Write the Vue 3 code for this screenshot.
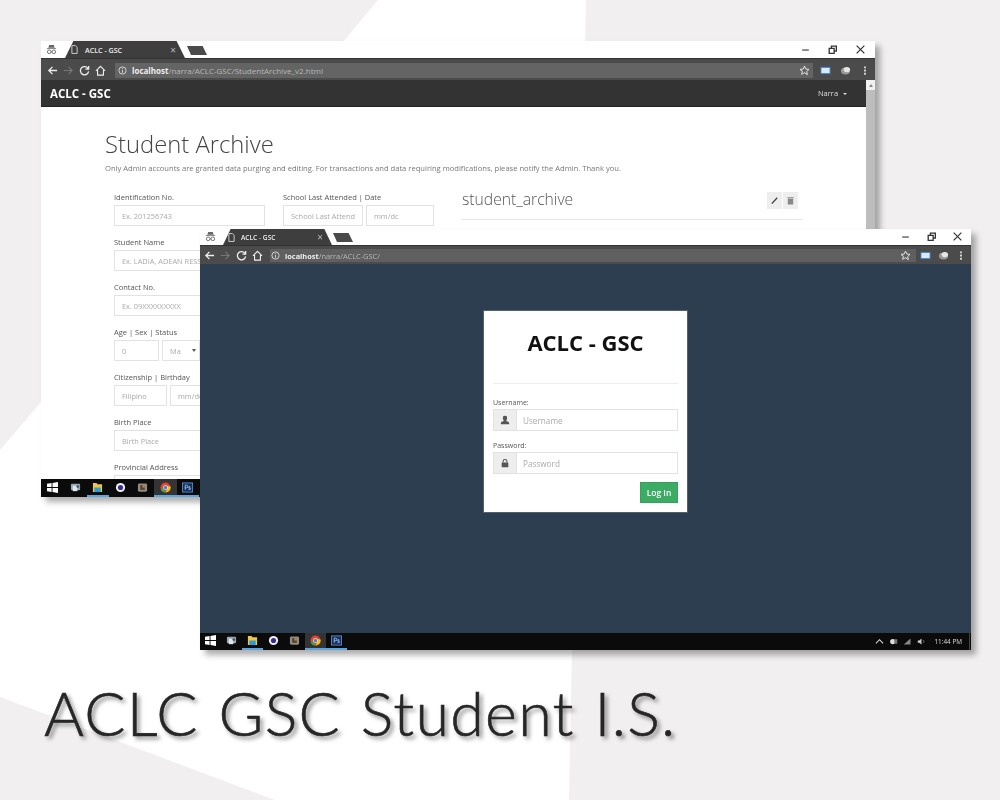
<template>
  <div class="page">
    <svg class="backdrop" viewBox="0 0 1000 800" aria-hidden="true">
      <polygon points="0,0 378,0 41,402 0,450" />
      <polygon points="586,0 1000,0 1000,800 569,800 572,650" />
      <polygon points="0,697 275,800 0,800" />
    </svg>

    <svg class="sprites" aria-hidden="true">
      <symbol id="i-win" viewBox="0 0 12 12"><path fill="#fff" d="M0 2l5-.8v4.3H0zM6 1l6-1v5.500H6zM0 6.500h5v4.300L0 10zM6 6.500h6V12l-6-1z" /></symbol>
      <symbol id="i-people" viewBox="0 0 12 12"><rect x="1" y="2" width="10" height="7" rx="1" fill="#9aa4ad" /><rect x="3" y="4" width="5" height="6" fill="#dfe6ec" /><circle cx="8.500" cy="5" r="1.500" fill="#44576a" /></symbol>
      <symbol id="i-folder" viewBox="0 0 12 12"><path fill="#f1c644" d="M1 1h4l1 1.500h5V11H1z" /><rect x="2.500" y="6" width="7" height="5" fill="#2f9bd8" /></symbol>
      <symbol id="i-ring" viewBox="0 0 12 12"><circle cx="6" cy="6" r="5" fill="#f3f0f8" /><circle cx="6" cy="6" r="2.800" fill="#3c2a8c" /></symbol>
      <symbol id="i-box" viewBox="0 0 12 12"><rect x="1" y="1.500" width="10" height="9" rx="1.500" fill="#8b8b88" /><rect x="3.500" y="3.500" width="5" height="5" fill="#5c3f2b" /><rect x="6" y="3.500" width="2.500" height="2.500" fill="#d08a3c" /></symbol>
      <symbol id="i-chrome" viewBox="0 0 12 12"><circle cx="6" cy="6" r="5.500" fill="#e0442f" /><path fill="#35a853" d="M.8 8.500 3.500 6 6 11.500A5.500 5.500 0 0 1 .8 8.500z" /><path fill="#f4c20d" d="M11.500 5 6 4l2 3-2 4.500A5.500 5.500 0 0 0 11.500 5z" /><circle cx="6" cy="6" r="2.500" fill="#fff" /><circle cx="6" cy="6" r="1.900" fill="#3f7fe0" /></symbol>
      <symbol id="i-ps" viewBox="0 0 12 12"><rect x=".5" y="1" width="11" height="10" fill="#18305c" stroke="#5a86c6" /><path fill="none" stroke="#9cc0ee" d="M3.500 8.500v-5h1.500a1.300 1.300 0 0 1 0 2.800H3.500M9 5.200H7.500v1.300H9v1.500H7" /></symbol>
      <symbol id="i-person" viewBox="0 0 12 12"><path fill="#555" d="M6 1a2.500 2.500 0 0 1 2.500 2.800C8.400 5.500 7.600 6.500 7.400 7c0 .7 3.600 1.100 3.600 2.500V11H1V9.500C1 8.100 4.600 7.700 4.600 7c-.2-.5-1-1.500-1.100-3.200A2.500 2.500 0 0 1 6 1z" /></symbol>
      <symbol id="i-lock" viewBox="0 0 12 12"><path fill="none" stroke="#555" stroke-width="1.300" d="M3.700 5.500V4a2.300 2.300 0 0 1 4.600 0v1.500" /><rect x="2" y="5.300" width="8" height="5.700" rx=".6" fill="#555" /></symbol>
      <symbol id="i-incognito" viewBox="0 0 12 12"><path fill="#666" d="M3.500 1h5l1 3h-7zM1 4.500h10v1H1z" /><circle cx="3.500" cy="8.500" r="2" fill="none" stroke="#666" /><circle cx="8.500" cy="8.500" r="2" fill="none" stroke="#666" /><path stroke="#666" d="M5.500 8.500h1" /></symbol>
    </svg>

    <section v-for="win in windows" :key="win.id" class="window" :class="`window-${win.id}`">
      <header class="strip">
        <svg class="incognito"><use href="#i-incognito" /></svg>
        <div class="tab">
          <svg class="tab-doc" viewBox="0 0 8 10"><path fill="none" stroke="#ddd" d="M1 .5h4l2 2v7H1z" /></svg>
          <span class="tab-title">ACLC - GSC</span>
          <span class="tab-close">×</span>
        </div>
        <div class="new-tab"></div>
        <div class="controls">
          <svg viewBox="0 0 10 10"><path stroke="#555" stroke-width="1.200" d="M2 5.500h6" /></svg>
          <svg viewBox="0 0 10 10"><path fill="none" stroke="#333" stroke-width="1.200" d="M2 4h4.500v4.500H2zM4 4V2h4.500v4.500h-2" /></svg>
          <svg viewBox="0 0 10 10"><path stroke="#333" stroke-width="1.100" d="M1.500 1.500l7 7M8.500 1.500l-7 7" /></svg>
        </div>
      </header>

      <div class="toolbar">
        <svg class="tool" viewBox="0 0 12 12"><path fill="none" stroke="#eee" stroke-width="1.400" d="M11 6H2M6 2 2 6l4 4" /></svg>
        <svg class="tool" viewBox="0 0 12 12"><path fill="none" stroke="#777" stroke-width="1.200" d="M1 6h9M6 2l4 4-4 4" /></svg>
        <svg class="tool" viewBox="0 0 12 12"><path fill="none" stroke="#eee" stroke-width="1.400" d="M10 4a4.500 4.500 0 1 0 .5 3M10.500 1v3.500H7" /></svg>
        <svg class="tool" viewBox="0 0 12 12"><path fill="none" stroke="#eee" stroke-width="1.200" d="M1 6.500 6 1.500l5 5M2.800 5.500V11h6.400V5.500" /></svg>
        <div class="address">
          <svg class="info" viewBox="0 0 10 10"><circle cx="5" cy="5" r="4" fill="none" stroke="#ddd" /><path stroke="#ddd" d="M5 4.500V7.500M5 2.500v1" /></svg>
          <span class="host">localhost</span><span class="path">{{ win.path }}</span>
          <svg class="star" viewBox="0 0 12 12"><path fill="none" stroke="#eee" d="M6 1.200l1.500 3.200 3.400.4-2.500 2.300.7 3.400L6 8.400l-3.100 1.700.7-3.400L1.100 4.800l3.400-.4z" /></svg>
        </div>
        <svg class="ext ext-screen" viewBox="0 0 12 12"><rect x="1" y="2.500" width="10" height="7" fill="#dfe8f2" stroke="#2f78c4" /></svg>
        <svg class="ext ext-cloud" viewBox="0 0 12 12"><ellipse cx="6" cy="6.500" rx="5" ry="3.800" fill="#9a9a9a" /><ellipse cx="7.500" cy="5" rx="3.500" ry="2.800" fill="#e6e6e6" /></svg>
        <svg class="ext dots" viewBox="0 0 4 12"><path fill="#ddd" d="M1 1.500h2v2H1zM1 5h2v2H1zM1 8.500h2v2H1z" /></svg>
      </div>

      <div v-if="win.id === 'archive'" class="archive">
        <div class="archive-main">
          <nav class="navbar">
            <strong class="brand">ACLC - GSC</strong>
            <span class="user">Narra <i class="caret"></i></span>
          </nav>
          <div class="content">
            <h1>Student Archive</h1>
            <p class="lead">Only Admin accounts are granted data purging and editing. For transactions and data requiring modifications, please notify the Admin. Thank you.</p>
            <div class="columns">
              <form class="col-form">
                <div v-for="row in formRows" :key="row.label" class="field">
                  <label>{{ row.label }}</label>
                  <div class="inputs">
                    <span v-for="box in row.boxes" :key="box.text" class="input" :style="{ width: box.width + 'px' }">
                      {{ box.text }}<i v-if="box.select" class="select-caret"></i>
                    </span>
                  </div>
                </div>
              </form>
              <div class="col-school">
                <label>School Last Attended | Date</label>
                <div class="inputs">
                  <span class="input" style="width: 80px">School Last Attend</span>
                  <span class="input" style="width: 68px">mm/dc</span>
                </div>
              </div>
              <div class="col-table">
                <div class="table-head">
                  <h2>student_archive</h2>
                  <div class="btn-group">
                    <span><svg viewBox="0 0 10 10"><path stroke="#444" stroke-width="1.500" d="M2 8.500 8 2" /></svg></span>
                    <span><svg viewBox="0 0 10 10"><path fill="#888" d="M2 3h6v6.500H2zM1.500 1.500h7v1h-7z" /></svg></span>
                  </div>
                </div>
              </div>
            </div>
          </div>
        </div>
        <div class="scrollbar"><span class="scroll-arrow"></span><span class="scroll-thumb"></span></div>
      </div>

      <div v-else class="login-body">
        <form class="login-card">
          <h2>ACLC - GSC</h2>
          <hr />
          <label>Username:</label>
          <div class="group">
            <span class="addon"><svg><use href="#i-person" /></svg></span>
            <span class="group-input">Username</span>
          </div>
          <label>Password:</label>
          <div class="group">
            <span class="addon"><svg><use href="#i-lock" /></svg></span>
            <span class="group-input">Password</span>
          </div>
          <button type="button" class="login-btn">Log In</button>
        </form>
      </div>

      <footer class="taskbar">
        <span v-for="item in taskItems" :key="item.icon" class="task" :class="{ open: item.open, active: item.active }">
          <svg><use :href="`#i-${item.icon}`" /></svg>
        </span>
        <div v-if="win.id === 'login'" class="tray">
          <svg viewBox="0 0 10 10"><path fill="none" stroke="#ddd" stroke-width="1.200" d="M1 7l4-4 4 4" /></svg>
          <svg viewBox="0 0 12 10"><circle cx="5" cy="5" r="3.500" fill="#ddd" /><rect x="7" y="2" width="4" height="6" fill="#777" /></svg>
          <svg viewBox="0 0 12 10"><path fill="#888" d="M1 9 10 1v8z" /></svg>
          <svg viewBox="0 0 12 10"><path fill="#ccc" d="M1 3.500h2L6 1v8L3 6.500H1z" /><path fill="none" stroke="#888" d="M8 3l1.500 2L8 7" /></svg>
          <span class="clock">11:44 PM</span>
          <span class="show-desktop"></span>
        </div>
      </footer>
    </section>

    <div class="caption">ACLC GSC Student I.S.</div>
  </div>
</template>

<script setup>
const windows = [
  { id: 'archive', path: '/narra/ACLC-GSC/StudentArchive_v2.html' },
  { id: 'login', path: '/narra/ACLC-GSC/' }
]

const taskItems = [
  { icon: 'win' },
  { icon: 'people' },
  { icon: 'folder', open: true },
  { icon: 'ring' },
  { icon: 'box' },
  { icon: 'chrome', open: true, active: true },
  { icon: 'ps', open: true }
]

const formRows = [
  { label: 'Identification No.', boxes: [{ text: 'Ex. 201256743', width: 151 }] },
  { label: 'Student Name', boxes: [{ text: 'Ex. LADIA, ADEAN RESS', width: 151 }] },
  { label: 'Contact No.', boxes: [{ text: 'Ex. 09XXXXXXXXX', width: 151 }] },
  { label: 'Age | Sex | Status', boxes: [{ text: '0', width: 45 }, { text: 'Ma', width: 38, select: true }] },
  { label: 'Citizenship | Birthday', boxes: [{ text: 'Filipino', width: 53 }, { text: 'mm/dd/yyyy', width: 90 }] },
  { label: 'Birth Place', boxes: [{ text: 'Birth Place', width: 151 }] },
  { label: 'Provincial Address', boxes: [{ text: 'Provincial Address', width: 151 }] }
]
</script>

<style>
html,
body {
  margin: 0;
  background: #fff;
}
</style>

<style scoped>
.page {
  position: relative;
  width: 1000px;
  height: 800px;
  overflow: hidden;
  background: #fff;
  font-family: "Open Sans", "Liberation Sans", sans-serif;
}

.backdrop {
  position: absolute;
  inset: 0;
  width: 1000px;
  height: 800px;
  fill: #f1eff0;
}

.sprites {
  position: absolute;
  width: 0;
  height: 0;
}

.window {
  position: absolute;
  display: flex;
  flex-direction: column;
  overflow: hidden;
  background: #fff;
  box-shadow: 5px 5px 6px rgba(0, 0, 0, 0.32);
  filter: blur(0.6px);
}

.window-archive {
  left: 41px;
  top: 41px;
  width: 834px;
  height: 456px;
}

.window-login {
  left: 200px;
  top: 229px;
  width: 771px;
  height: 421px;
}

/* tab strip */
.strip {
  display: flex;
  align-items: flex-end;
  flex: none;
  height: 17px;
  background: #fff;
}

.window-login .strip {
  height: 16px;
}

.incognito {
  width: 11px;
  height: 11px;
  margin: 0 0 3px 5px;
}

.tab {
  display: flex;
  align-items: center;
  width: 120px;
  height: 17px;
  margin-left: 8px;
  padding: 0 9px 0 6px;
  box-sizing: border-box;
  background: #3e3e3e;
  clip-path: polygon(0 100%, 7% 0, 93% 0, 100% 100%);
  color: #eee;
  font-size: 7.100px;
  font-weight: 600;
}

.window-login .tab {
  width: 109px;
  height: 16px;
  margin-left: 7px;
  padding-left: 5px;
  font-size: 6.600px;
}

.tab-doc {
  width: 7px;
  height: 9px;
  margin-right: 7px;
}

.window-login .tab-doc {
  margin-right: 6px;
}

.tab-title {
  flex: 1;
}

.tab-close {
  font-size: 10px;
  font-weight: 400;
  color: #bbb;
}

.new-tab {
  width: 20px;
  height: 9px;
  margin: 0 0 3px 2px;
  background: #4a4a4a;
  clip-path: polygon(0 0, 78% 0, 100% 100%, 20% 100%);
}

.window-login .new-tab {
  margin-left: 1px;
}

.controls {
  display: flex;
  gap: 16.500px;
  margin: 0 9.500px 3px auto;
}

.window-login .controls {
  gap: 15px;
  margin-right: 8px;
}

.controls svg {
  width: 11px;
  height: 11px;
}

/* toolbar */
.toolbar {
  display: flex;
  align-items: center;
  gap: 5px;
  flex: none;
  height: 22px;
  padding: 1px 8px 0 6px;
  box-sizing: border-box;
  background: #4b4b4b;
  border-top: 1px solid #333;
}

.window-login .toolbar {
  height: 19px;
  padding-left: 4px;
}

.tool {
  width: 11px;
  height: 11px;
}

.address {
  display: flex;
  align-items: center;
  flex: 1;
  height: 15px;
  margin-left: 4px;
  padding: 0 3px;
  background: #646464;
  color: #b8b8b8;
  font-size: 8px;
}

.window-login .address {
  height: 13px;
  margin-left: 2px;
  padding: 0 5px 0 1px;
  background: #5f5f5f;
  font-size: 7.400px;
}

.info {
  width: 9px;
  height: 9px;
  margin-right: 5px;
}

.host {
  font-weight: 700;
  color: #eee;
}

.star {
  width: 11px;
  height: 11px;
  margin-left: auto;
}

.ext {
  width: 11px;
  height: 11px;
}

.ext-screen {
  margin-left: 1.500px;
}

.ext-cloud {
  margin-left: 4px;
}

.dots {
  width: 4px;
  margin-left: 7.500px;
}

.window-login .ext-screen {
  margin-left: -1.500px;
}

.window-login .ext-cloud {
  margin-left: 2px;
}

.window-login .dots {
  margin-left: 5.500px;
}

/* archive page */
.archive {
  display: flex;
  flex: 1;
  min-height: 0;
}

.archive-main {
  flex: 1;
  min-width: 0;
}

.navbar {
  display: flex;
  align-items: center;
  justify-content: space-between;
  height: 27px;
  padding: 0 19px 0 9px;
  box-sizing: border-box;
  background: #333;
  color: #fff;
  border-bottom: 1px solid #222;
}

.brand {
  font-size: 11.500px;
  font-weight: 700;
}

.user {
  font-size: 7.500px;
  color: #ddd;
}

.caret {
  display: inline-block;
  margin-left: 3px;
  border: 2.500px solid transparent;
  border-top-color: #ddd;
  border-bottom: 0;
  vertical-align: middle;
}

.content {
  padding: 21px 0 0 64px;
}

h1 {
  margin: 0;
  font-size: 23.800px;
  font-weight: 300;
  line-height: 32px;
  color: #444;
}

.lead {
  margin: 3px 0 0;
  font-size: 7.600px;
  line-height: 11px;
  color: #777;
  white-space: nowrap;
}

.columns {
  display: flex;
  margin-top: 16px;
  padding-left: 9px;
}

.col-form {
  width: 151px;
}

.col-school {
  width: 151px;
  margin-left: 18px;
}

.col-table {
  width: 340px;
  margin-left: 28px;
}

label {
  display: block;
  height: 15px;
  font-size: 7.500px;
  line-height: 14px;
  color: #555;
}

.field {
  height: 45px;
}

.inputs {
  display: flex;
  gap: 3px;
}

.input {
  display: flex;
  align-items: center;
  flex: none;
  position: relative;
  height: 21px;
  padding-left: 7px;
  box-sizing: border-box;
  border: 1px solid #e2e2e2;
  font-size: 7.400px;
  color: #aaa;
  white-space: nowrap;
  overflow: hidden;
}

.select-caret {
  position: absolute;
  right: 3px;
  top: 8px;
  border: 2px solid transparent;
  border-top: 3px solid #555;
  border-bottom: 0;
}

.table-head {
  display: flex;
  align-items: center;
  justify-content: space-between;
  height: 30px;
  padding-right: 4px;
  border-bottom: 1px solid #e6e6e6;
  margin-top: -1px;
}

h2 {
  margin: 0;
  font-weight: 400;
}

.table-head h2 {
  margin-bottom: 10px;
  font-size: 15.700px;
  font-weight: 300;
  color: #555;
}

.btn-group {
  display: flex;
  gap: 1px;
  margin-top: -8px;
}

.btn-group span {
  display: flex;
  align-items: center;
  justify-content: center;
  width: 15px;
  height: 17px;
  background: #eee;
}

.btn-group svg {
  width: 9px;
  height: 9px;
}

.scrollbar {
  display: flex;
  flex-direction: column;
  flex: none;
  width: 9px;
  background: #f1f1f1;
}

.scroll-arrow {
  align-self: center;
  width: 0;
  height: 0;
  margin: 4px 0 3px;
  border: 2px solid transparent;
  border-top: 0;
  border-bottom: 3px solid #888;
}

.scroll-thumb {
  flex: 1;
  background: #bdbdbd;
}

/* login page */
.login-body {
  display: flex;
  justify-content: center;
  flex: 1;
  min-height: 0;
  padding-top: 46px;
  background: #2c3e50;
}

.login-card {
  display: flex;
  flex-direction: column;
  width: 205px;
  height: 203px;
  padding: 0 9px;
  box-sizing: border-box;
  background: #fff;
  border: 1px solid #50606f;
}

.login-card h2 {
  margin-top: 16px;
  font-size: 22px;
  font-weight: 700;
  line-height: 30px;
  color: #111;
  text-align: center;
}

.login-card hr {
  width: 100%;
  margin: 26px 0 13px;
  border: 0;
  border-top: 1px solid #eee;
}

.login-card label {
  height: 12px;
  font-size: 7px;
  line-height: 12px;
}

.group {
  display: flex;
  height: 22px;
  margin-bottom: 9px;
  box-sizing: border-box;
  border: 1px solid #e2e2e2;
}

.addon {
  display: flex;
  align-items: center;
  justify-content: center;
  flex: none;
  width: 22px;
  background: #eee;
  border-right: 1px solid #e2e2e2;
}

.addon svg {
  width: 10px;
  height: 10px;
}

.group-input {
  display: flex;
  align-items: center;
  padding-left: 6px;
  font-size: 8.200px;
  color: #aaa;
}

.login-btn {
  align-self: flex-end;
  width: 38px;
  height: 21px;
  margin-top: -1px;
  padding: 0;
  border: 1px solid #37a060;
  background: #3cab64;
  color: #fff;
  font-family: inherit;
  font-size: 8.500px;
  font-weight: 600;
}

/* taskbar */
.taskbar {
  display: flex;
  flex: none;
  align-items: stretch;
  height: 18px;
  margin-top: auto;
  background: #0b0b0b;
  z-index: 1;
}

.window-login .taskbar {
  height: 17px;
}

.task {
  display: flex;
  align-items: center;
  justify-content: center;
  box-sizing: border-box;
  width: 22.500px;
  border-bottom: 2px solid transparent;
}

.task:first-child {
  width: 23px;
}

.window-login .task {
  width: 21px;
}

.task svg {
  width: 11px;
  height: 11px;
}

.task.open {
  border-bottom-color: #5aa6e0;
}

.task.active {
  background: #343434;
}

.tray {
  display: flex;
  align-items: center;
  gap: 5px;
  margin-left: auto;
}

.tray svg {
  width: 9px;
  height: 9px;
}

.clock {
  margin-left: 3.500px;
  font-size: 6.400px;
  color: #ddd;
}

.show-desktop {
  width: 1px;
  height: 100%;
  margin-left: 2px;
  margin-right: 1px;
  background: #444;
}

.caption {
  position: absolute;
  left: 44px;
  top: 671px;
  font-family: Lato, "Liberation Sans", sans-serif;
  font-size: 61px;
  font-weight: 300;
  line-height: 84px;
  letter-spacing: 1.250px;
  word-spacing: 2px;
  color: #262626;
  -webkit-text-stroke: 0.6px #262626;
  text-shadow: 3px 3px 4px rgba(0, 0, 0, 0.5);
  white-space: nowrap;
}
</style>
